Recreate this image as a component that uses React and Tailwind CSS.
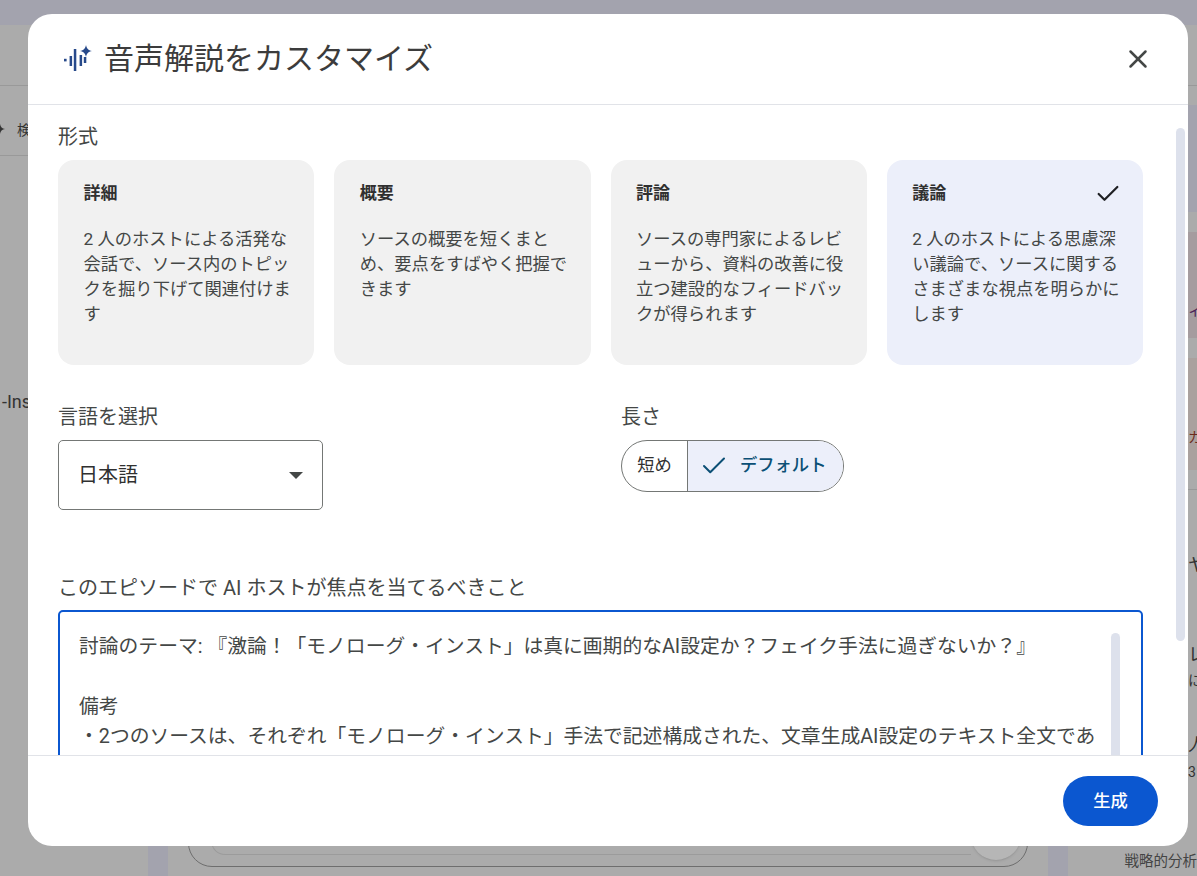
import React from "react";
import { X, Check } from "lucide-react";

const formats = [
  {
    title: "詳細",
    text: "2 人のホストによる活発な会話で、ソース内のトピックを掘り下げて関連付けます",
  },
  {
    title: "概要",
    text: "ソースの概要を短くまとめ、要点をすばやく把握できます",
  },
  {
    title: "評論",
    text: "ソースの専門家によるレビューから、資料の改善に役立つ建設的なフィードバックが得られます",
  },
  {
    title: "議論",
    text: "2 人のホストによる思慮深い議論で、ソースに関するさまざまな視点を明らかにします",
    selected: true,
  },
];

function AudioIcon() {
  return (
    <svg width="30" height="30" viewBox="0 0 30 30" fill="#27498a" className="shrink-0">
      <rect x="2" y="14.8" width="2.6" height="2.6" />
      <rect x="7.6" y="12" width="2.5" height="10" />
      <rect x="11.8" y="5" width="2.5" height="22" />
      <rect x="17.6" y="11" width="2.5" height="11" />
      <rect x="21.8" y="13" width="2.5" height="6" />
      <path d="M24 1 C24.7 4.6 26.2 6.2 30 7 C26.2 7.8 24.7 9.4 24 13 C23.3 9.4 21.8 7.8 18 7 C21.8 6.2 23.3 4.6 24 1 Z" />
    </svg>
  );
}

function FormatCard({ title, text, selected }) {
  return (
    <div
      className={
        selected
          ? "h-[205px] rounded-2xl bg-[#eceffa] pl-[25.5px] pr-[20px] pt-[22px]"
          : "h-[205px] rounded-2xl bg-[#f1f1f1] pl-[25.5px] pr-[20px] pt-[22px]"
      }
    >
      <div className="flex items-center justify-between h-[24px]">
        <span className="text-[17px] font-bold text-[#303030]">{title}</span>
        {selected && <Check size={28} strokeWidth={1.9} className="text-[#202124] mr-[1px]" />}
      </div>
      <p className="mt-[21px] text-[17.3px] leading-[25px] text-[#444746]">{text}</p>
    </div>
  );
}

function PageBehind() {
  return (
    <div className="h-[876px] w-full flex flex-col bg-[#a3a3ae] text-[#333]">
      <div className="h-[25px] pl-[70px] overflow-hidden">
        <div className="-mt-[20px] text-[16px] leading-[24px]">g</div>
      </div>
      <div className="flex flex-1 min-h-0">
        <div className="w-[148px] bg-[#ababab] flex flex-col overflow-hidden">
          <div className="h-[61px] border-b border-[#999]" />
          <div className="h-[70px] border-b border-[#999] flex items-center pt-[20px] pl-[1px] text-[14px] whitespace-nowrap">
            <svg width="16" height="16" viewBox="0 0 16 16" fill="#333" className="-ml-[10px] mr-[10px]">
              <path d="M9 1 C9.6 4 11 5.4 14 6 C11 6.6 9.6 8 9 11 C8.4 8 7 6.6 4 6 C7 5.4 8.4 4 9 1 Z" />
              <path d="M2 15 L8 9" stroke="#333" strokeWidth="1.6" />
            </svg>
            検索
          </div>
          <div className="mt-[232px] pl-[2px] text-[18px]">-Insta</div>
        </div>
        <div className="ml-[20px] w-[880px] bg-[#ababab] flex flex-col justify-end items-center pb-[9px]">
          <div className="w-[840px] h-[60px] rounded-[24px] border border-[#6e6e6e] flex items-end pr-[6px]">
            <div className="flex-1 h-[20px] mb-[11px] ml-[22px] rounded-bl-[14px] border-l border-b border-[#9b9b9b]" />
            <div className="w-[50px] h-[50px] rounded-full bg-[#b6b6b6] shadow mb-[6px]" />
          </div>
        </div>
        <div className="ml-[20px] flex-1 bg-[#ababab] flex flex-col overflow-hidden whitespace-nowrap">
          <div className="h-[61px] border-b border-[#999]" />
          <div className="h-[19px]" />
          <div className="h-[107px] bg-[#a3a3ae]" />
          <div className="h-[20px]" />
          <div className="h-[106px] bg-[#a59c9f] pl-[120px] pt-[68px] text-[14px] leading-[20px] text-[#4c1d55]">ィフ</div>
          <div className="h-[20px]" />
          <div className="h-[112px] bg-[#aaa19e] pl-[120px] pt-[69px] text-[14px] leading-[20px] text-[#6b2a1c]">カ</div>
          <div className="h-[20px] border-b border-[#999]" />
          <div className="mt-[65px] h-[20px] pl-[120px] text-[18px] leading-[20px]">ヤ</div>
          <div className="mt-[70px] h-[20px] pl-[120px] text-[18px] leading-[20px]">レ</div>
          <div className="mt-[5px] h-[20px] pl-[120px] text-[14px] leading-[20px]">に仁</div>
          <div className="mt-[45px] h-[20px] pl-[120px] text-[18px] leading-[20px]">人</div>
          <div className="mt-[7px] h-[20px] pl-[120px] text-[14px] leading-[20px]">3</div>
          <div className="mt-[43px] flex pl-[32px]">
            <svg width="25" height="35" viewBox="0 0 25 35" fill="none" stroke="#4a4030" strokeWidth="2.4">
              <path d="M2 4 V28 Q2 33.5 7.5 33.5 H24" />
            </svg>
            <div className="ml-[23px]">
              <div className="h-[20px] text-[18px] font-bold leading-[20px]">戦略的</div>
              <div className="mt-[7px] h-[20px] text-[14.5px] leading-[20px] text-[#444]">戦略的分析</div>
            </div>
          </div>
        </div>
      </div>
    </div>
  );
}

export default function App() {
  return (
    <div
      className="relative h-[876px] overflow-hidden"
      style={{ fontFamily: 'Roboto, "Noto Sans CJK JP", sans-serif' }}
    >
      <PageBehind />

      <div className="absolute left-[28px] top-[14px] w-[1160px] h-[832px] bg-white rounded-[24px] flex flex-col overflow-hidden">
        <header className="h-[91px] shrink-0 border-b border-[#e1e3e8] flex items-center pl-[34px] pr-[36px]">
          <AudioIcon />
          <h1 className="ml-[12px] text-[30px] leading-[40px] text-[#3c3c3c] font-normal">
            音声解説をカスタマイズ
          </h1>
          <X size={30} strokeWidth={2} className="ml-auto -mr-[1px] text-[#444746]" />
        </header>

        <div className="relative flex-1 min-h-0 overflow-hidden pl-[30px] pr-[45px] pt-[18px]">
          <div className="text-[20px] leading-[28px] text-[#444746]">形式</div>
          <div className="mt-[9px] grid grid-cols-4 gap-[20px]">
            {formats.map((f) => (
              <FormatCard key={f.title} {...f} />
            ))}
          </div>

          <div className="mt-[38px] flex">
            <div className="w-[563px]">
              <div className="text-[20px] leading-[28px] text-[#444746]">言語を選択</div>
              <div className="mt-[9px] w-[265px] h-[70px] border border-[#747775] rounded-[5px] flex items-center justify-between pl-[20px] pr-[19px]">
                <span className="-ml-[1px] text-[20px] text-[#303030]">日本語</span>
                <span className="w-0 h-0 border-x-[7px] border-x-transparent border-t-[7px] border-t-[#444746]" />
              </div>
            </div>
            <div>
              <div className="text-[20px] leading-[28px] text-[#444746]">長さ</div>
              <div className="mt-[9px] w-[223px] h-[52px] border border-[#747775] rounded-full overflow-hidden flex text-[17.3px]">
                <div className="w-[66px] border-r border-[#747775] flex items-center justify-center text-[#303030]">
                  短め
                </div>
                <div className="flex-1 bg-[#eceffa] flex items-center pl-[11px] text-[#0b4f75] font-medium">
                  <Check size={30} strokeWidth={1.6} />
                  <span className="ml-[11px]">デフォルト</span>
                </div>
              </div>
            </div>
          </div>

          <div className="mt-[64px] text-[20px] leading-[28px] text-[#444746]">
            このエピソードで AI ホストが焦点を当てるべきこと
          </div>
          <div className="relative mt-[8px] h-[200px] border-2 border-[#0b57d0] rounded-[5px] pl-[19px] pr-[30px] pt-[20px] text-[19.8px] leading-[30px] text-[#444746]">
            <p>討論のテーマ: 『激論！「モノローグ・インスト」は真に画期的なAI設定か？フェイク手法に過ぎないか？』</p>
            <p className="mt-[30px]">備考</p>
            <p>・2つのソースは、それぞれ「モノローグ・インスト」手法で記述構成された、文章生成AI設定のテキスト全文であり、内容を比較します</p>
            <div className="absolute right-[21px] top-[21px] w-[9px] h-[140px] rounded-full bg-[#dde1ec]" />
          </div>

          <div className="absolute right-[3px] top-[23px] w-[9px] h-[513px] rounded-full bg-[#dde1ec]" />
        </div>

        <footer className="h-[91px] shrink-0 border-t border-[#e1e3e8] flex items-center justify-end pr-[30px]">
          <button className="w-[95px] h-[50px] pt-[2px] rounded-full bg-[#0b57d0] text-white text-[17.3px] font-medium">
            生成
          </button>
        </footer>
      </div>
    </div>
  );
}
